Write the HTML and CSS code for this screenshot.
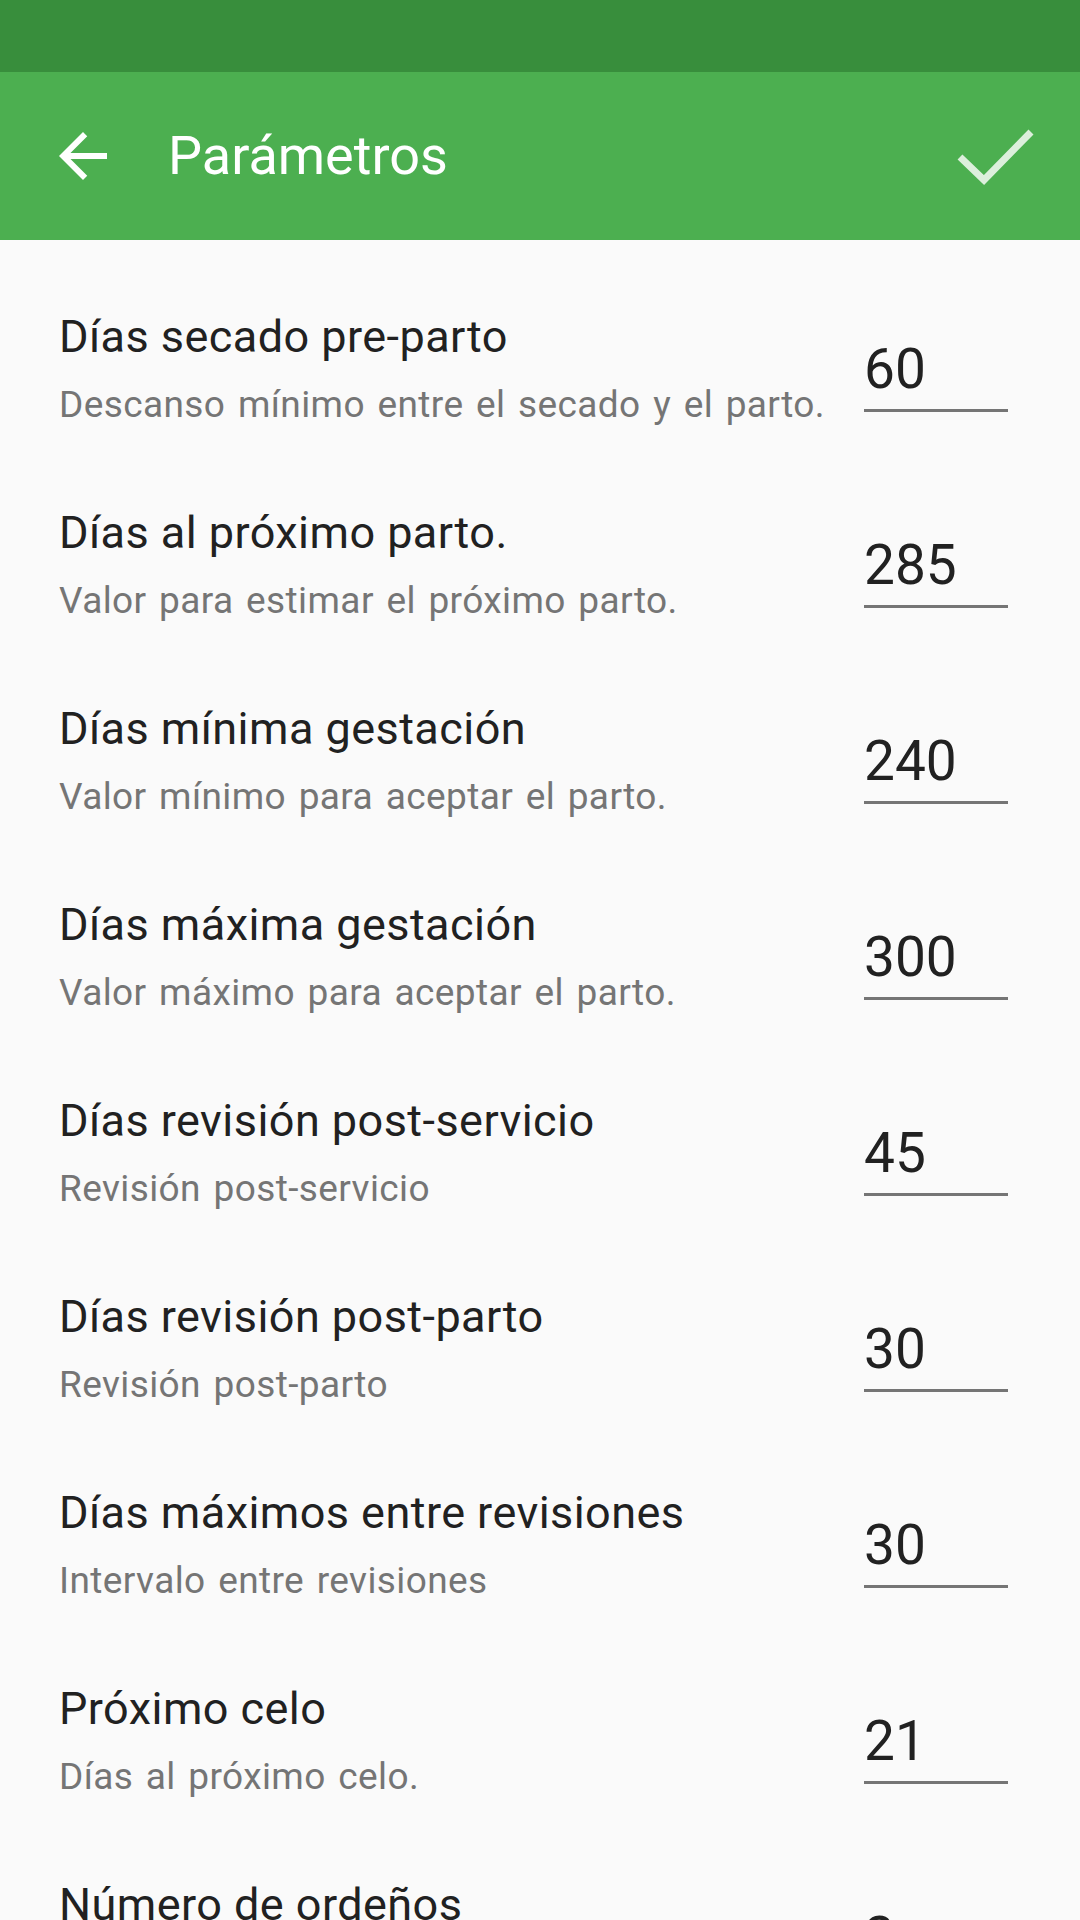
FILE: index.html
```html
<!DOCTYPE html>
<html lang="es">
<head>
<meta charset="utf-8">
<title>Parámetros</title>
<link rel="stylesheet" href="styles.css">
</head>
<body>
<div class="statusbar"></div>
<header class="toolbar">
  <svg class="back" viewBox="0 0 24 24" width="72" height="72"><path fill="#ffffff" d="M20 11H7.83l5.59-5.59L12 4l-8 8 8 8 1.41-1.41L7.83 13H20v-2z"/></svg>
  <h1 class="title">Parámetros</h1>
  <svg class="check" viewBox="0 0 80 60" width="80" height="60"><polyline points="4,31 28,54 75,6" fill="none" stroke="#dcefdc" stroke-width="7"/></svg>
</header>
<main class="list">
  <div class="row"><div class="texts"><div class="name">Días secado pre-parto</div><div class="desc">Descanso mínimo entre el secado y el parto.</div></div><div class="value">60</div></div>
  <div class="row"><div class="texts"><div class="name">Días al próximo parto.</div><div class="desc">Valor para estimar el próximo parto.</div></div><div class="value">285</div></div>
  <div class="row"><div class="texts"><div class="name">Días mínima gestación</div><div class="desc">Valor mínimo para aceptar el parto.</div></div><div class="value">240</div></div>
  <div class="row"><div class="texts"><div class="name">Días máxima gestación</div><div class="desc">Valor máximo para aceptar el parto.</div></div><div class="value">300</div></div>
  <div class="row"><div class="texts"><div class="name">Días revisión post-servicio</div><div class="desc">Revisión post-servicio</div></div><div class="value">45</div></div>
  <div class="row"><div class="texts"><div class="name">Días revisión post-parto</div><div class="desc">Revisión post-parto</div></div><div class="value">30</div></div>
  <div class="row"><div class="texts"><div class="name">Días máximos entre revisiones</div><div class="desc">Intervalo entre revisiones</div></div><div class="value">30</div></div>
  <div class="row"><div class="texts"><div class="name">Próximo celo</div><div class="desc">Días al próximo celo.</div></div><div class="value">21</div></div>
  <div class="row"><div class="texts"><div class="name">Número de ordeños</div></div><div class="value">2</div></div>
</main>
</body>
</html>
```
FILE: styles.css
```css
html, body {
  margin: 0;
  padding: 0;
}
body {
  width: 1080px;
  height: 1920px;
  overflow: hidden;
  background: #fafafa;
  font-family: Roboto, "Noto Sans", sans-serif;
}
.statusbar {
  height: 72px;
  background: #388e3c;
}
.toolbar {
  height: 168px;
  background: #4caf50;
  display: flex;
  align-items: center;
}
.back {
  margin-left: 47px;
  flex: none;
}
.title {
  margin: 0 0 0 49px;
  font-size: 54px;
  font-weight: 400;
  color: #ffffff;
  line-height: 64px;
}
.check {
  margin-left: auto;
  margin-right: 44px;
  flex: none;
}
.list {
  display: flex;
  flex-direction: column;
}
.row {
  height: 196px;
  flex: none;
  display: flex;
  align-items: flex-start;
  padding-left: 59px;
  padding-right: 72px;
  box-sizing: border-box;
}
.texts {
  flex: 1;
  padding-top: 71px;
  min-width: 0;
}
.name {
  font-size: 45px;
  line-height: 52px;
  letter-spacing: 0.45px;
  color: #212121;
  white-space: nowrap;
}
.desc {
  margin-top: 20px;
  font-size: 37px;
  line-height: 44px;
  letter-spacing: 0.4px;
  word-spacing: 3px;
  color: #757575;
  white-space: nowrap;
}
.value {
  width: 144px;
  flex: none;
  margin-top: 97px;
  font-size: 55px;
  line-height: 64px;
  color: #212121;
  padding-bottom: 8px;
  border-bottom: 3px solid #757575;
  box-sizing: content-box;
}
```
